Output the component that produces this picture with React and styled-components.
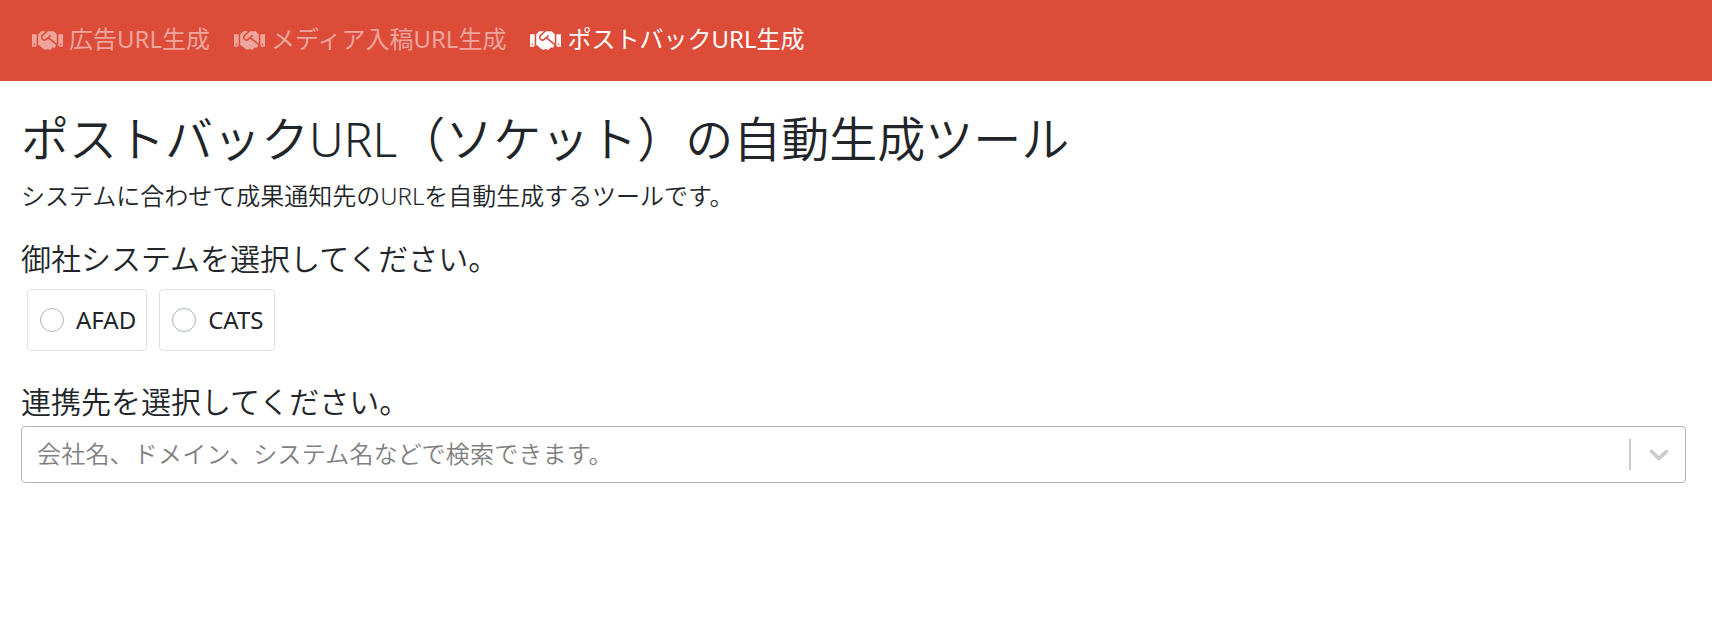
import React from "react";
import styled, { createGlobalStyle } from "styled-components";
import { FaHandshake } from "react-icons/fa";

const GlobalStyle = createGlobalStyle`
  html, body {
    margin: 0;
    padding: 0;
    background: #fff;
  }
  body {
    font-family: "Noto Sans", "Noto Sans CJK JP", sans-serif;
    font-weight: 350;
    color: #212529;
    font-size: 24px;
    line-height: 1.5;
  }
`;

const links = [
  { label: "広告URL生成" },
  { label: "メディア入稿URL生成" },
  { label: "ポストバックURL生成", active: true },
];

export default function App() {
  return (
    <>
      <GlobalStyle />
      <Header>
        {links.map(({ label, active }) => (
          <NavLink key={label} $active={active}>
            <FaHandshake />
            <NavLabel>{label}</NavLabel>
          </NavLink>
        ))}
      </Header>
      <Main>
        <Title>ポストバックURL（ソケット）の自動生成ツール</Title>
        <Lead>システムに合わせて成果通知先のURLを自動生成するツールです。</Lead>
        <Heading>御社システムを選択してください。</Heading>
        <RadioRow>
          <RadioCard>
            <RadioDot />
            AFAD
          </RadioCard>
          <RadioCard>
            <RadioDot />
            CATS
          </RadioCard>
        </RadioRow>
        <Heading>連携先を選択してください。</Heading>
        <Select>
          <Placeholder>会社名、ドメイン、システム名などで検索できます。</Placeholder>
          <Separator />
          <Chevron viewBox="0 0 20 20">
            <path d="M4.516 7.548c0.436-0.446 1.043-0.481 1.576 0l3.908 3.747 3.908-3.747c0.533-0.481 1.141-0.446 1.574 0 0.436 0.445 0.408 1.197 0 1.615-0.406 0.418-4.695 4.502-4.695 4.502-0.217 0.223-0.502 0.335-0.787 0.335s-0.57-0.112-0.789-0.335c0 0-4.287-4.084-4.695-4.502s-0.436-1.17 0-1.615z" />
          </Chevron>
        </Select>
      </Main>
    </>
  );
}

const Header = styled.nav`
  height: 81px;
  background-color: #dd4b39;
  display: flex;
  align-items: center;
  padding-left: 32px;
  gap: 24px;
`;

const NavLink = styled.a`
  display: flex;
  align-items: center;
  gap: 6px;
  font-size: 24px;
  font-weight: 400;
  color: ${({ $active }) => ($active ? "#fff" : "rgba(255, 255, 255, 0.5)")};

  & > svg {
    width: 31px;
    height: 25px;
  }
`;

const NavLabel = styled.span`
  margin-top: -4px;
`;

const Main = styled.main`
  padding: 0 26px 0 21px;
`;

const Title = styled.h1`
  margin: 29px 0 10px;
  font-size: 48px;
  font-weight: 350;
  line-height: 1.2;
`;

const Lead = styled.p`
  margin: 0 0 27px;
  font-size: 24px;
  line-height: 36px;
`;

const Heading = styled.h4`
  margin: 0 0 12px;
  font-size: 30px;
  font-weight: 350;
  line-height: 1.2;
`;

const RadioRow = styled.div`
  display: flex;
  gap: 12px;
  margin: 0 0 33px 6px;
`;

const RadioCard = styled.label`
  display: flex;
  align-items: center;
  gap: 12px;
  height: 62px;
  box-sizing: border-box;
  padding: 0 10px 0 12px;
  border: 1px solid #dee2e6;
  border-radius: 4px;
  font-size: 24px;
  font-weight: 400;
`;

const RadioDot = styled.span`
  width: 24px;
  height: 24px;
  box-sizing: border-box;
  border: 1px solid #adb5bd;
  border-radius: 50%;
  background: #fff;
`;

const Select = styled.div`
  display: flex;
  align-items: center;
  height: 57px;
  box-sizing: border-box;
  margin-top: -6px;
  border: 1px solid #b3b3b3;
  border-radius: 4px;
  padding: 0 10px 0 15px;
`;

const Placeholder = styled.span`
  flex: 1;
  color: #808080;
  font-size: 24px;
  letter-spacing: 0.2px;
`;

const Separator = styled.span`
  width: 2px;
  height: 31px;
  background: #ccc;
  margin-right: 12px;
`;

const Chevron = styled.svg`
  width: 32px;
  height: 32px;
  fill: #ccc;
`;
